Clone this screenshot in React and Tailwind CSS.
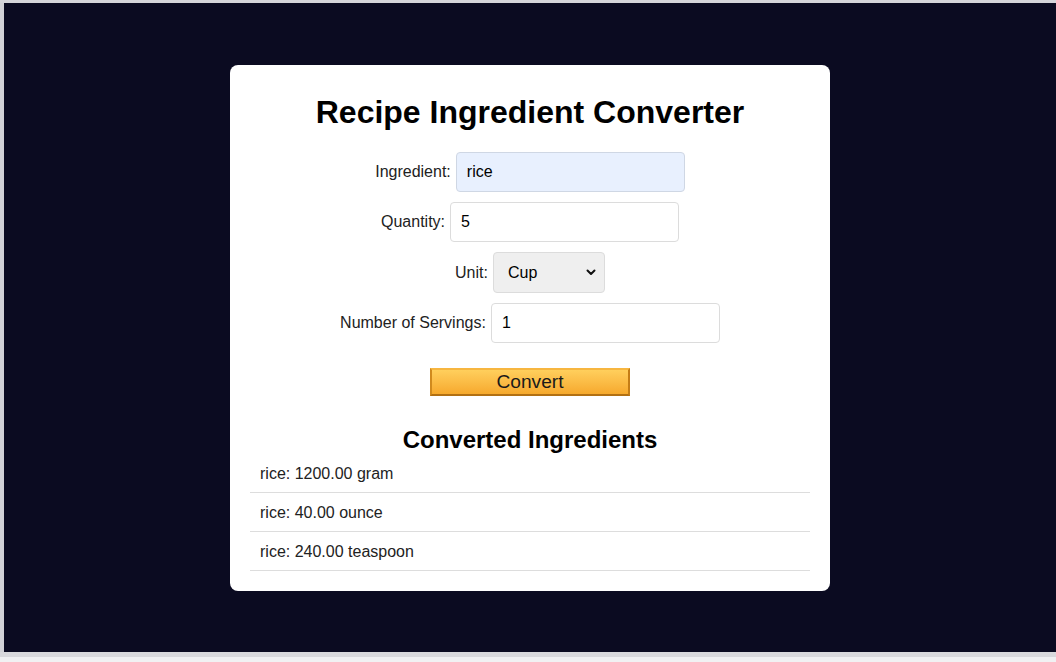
import React from "react";

export default function App() {
  const font = { fontFamily: '"Liberation Sans", Arial, sans-serif' };
  return (
    <div className="w-[1056px] h-[662px] flex flex-col bg-[#f0f0f2] overflow-hidden" style={font}>
      <div className="h-[3px] bg-[#d5d5da]" />
      <div className="flex h-[649px]">
        <div className="w-[4px] bg-[#d2d2d7]" />
        <div className="flex-1 bg-[#0b0b21] flex items-start justify-center pt-[62px]">
          <div className="w-[600px] bg-white rounded-lg px-[20px] pt-[29px] pb-[20px] flex flex-col">
            <h1 className="text-[32px] leading-[37px] font-bold text-black text-center">
              Recipe Ingredient Converter
            </h1>
            <div className="mt-[21px] flex flex-col gap-[10px] text-[16px] text-[#222]">
              <div className="flex items-center justify-center gap-[5px]">
                <span>Ingredient:</span>
                <div className="w-[229px] h-[40px] rounded-[4px] border border-[#cfd7e4] bg-[#e8f0fe] px-[10px] flex items-center text-black">
                  rice
                </div>
              </div>
              <div className="flex items-center justify-center gap-[5px]">
                <span>Quantity:</span>
                <div className="w-[229px] h-[40px] rounded-[4px] border border-[#dcdcdc] bg-white px-[10px] flex items-center text-black">
                  5
                </div>
              </div>
              <div className="flex items-center justify-center gap-[5px]">
                <span>Unit:</span>
                <div className="w-[112px] h-[41px] rounded-[4px] border border-[#dcdcdc] bg-[#efefef] pl-[14px] pr-[8px] flex items-center justify-between text-black">
                  <span>Cup</span>
                  <svg width="10" height="7" viewBox="0 0 10 7" fill="none">
                    <path d="M1.5 1.5 L5 5 L8.5 1.5" stroke="#111" strokeWidth="2" strokeLinecap="round" strokeLinejoin="round" />
                  </svg>
                </div>
              </div>
              <div className="flex items-center justify-center gap-[5px]">
                <span>Number of Servings:</span>
                <div className="w-[229px] h-[40px] rounded-[4px] border border-[#dcdcdc] bg-white px-[10px] flex items-center text-black">
                  1
                </div>
              </div>
            </div>
            <div className="mt-[25px] flex justify-center">
              <button className="w-[200px] h-[28px] border-2 border-t-[#f7b640] border-l-[#d08a1e] border-r-[#c47d16] border-b-[#b27012] bg-linear-to-b from-[#ffcf5c] to-[#f6a92c] text-[19.2px] leading-[22px] text-[#1a1a1a] flex items-center justify-center">
                Convert
              </button>
            </div>
            <h2 className="mt-[30px] text-[24px] leading-[28px] font-bold text-black text-center">
              Converted Ingredients
            </h2>
            <ul className="text-[16px] text-[#222]">
              {["rice: 1200.00 gram", "rice: 40.00 ounce", "rice: 240.00 teaspoon"].map((t) => (
                <li key={t} className="px-[10px] pt-[11px] pb-[9px] leading-[18px] border-b border-[#dddddd]">
                  {t}
                </li>
              ))}
            </ul>
          </div>
        </div>
      </div>
      <div className="h-[5px] bg-[#d9d9dd]" />
      <div className="flex-1 bg-[#f1f1f3]" />
    </div>
  );
}
